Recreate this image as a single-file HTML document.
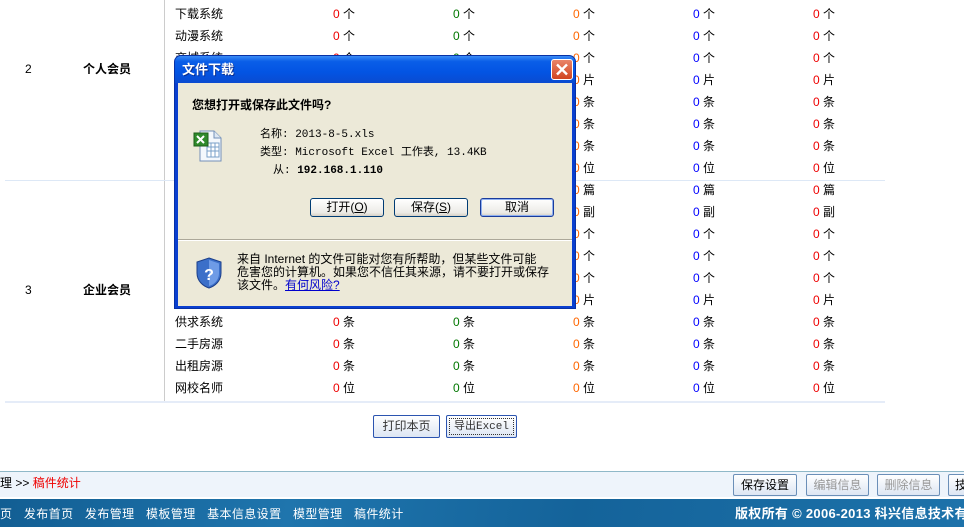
<!DOCTYPE html>
<html><head><meta charset="utf-8"><style>
*{margin:0;padding:0;box-sizing:border-box}
body{width:964px;height:527px;overflow:hidden;background:#fff;font-family:"Liberation Sans","Noto Sans CJK SC","WenQuanYi Zen Hei",sans-serif;font-size:12px;color:#000;position:relative}
.a{position:absolute;white-space:nowrap;line-height:14px}
.r{position:absolute;left:0;width:964px;height:22px}
.r span{position:absolute;top:4px;line-height:14px}
.n{left:175px}
.c1{left:333px;color:#e00}.c2{left:453px;color:#070}.c3{left:573px;color:#f60}.c4{left:693px;color:#00f}.c5{left:813px;color:#e00}
.u1{left:343px}.u2{left:463px}.u3{left:583px}.u4{left:703px}.u5{left:823px}
.btn{position:absolute;border:1px solid #2b54b0;border-radius:2px;background:linear-gradient(#fff,#dde6f3);text-align:center;font-size:12px;line-height:21px;color:#333}
.xb{position:absolute;border:1px solid #003c74;border-radius:3px;background:linear-gradient(#fff,#ecebe6 80%,#d6d0c5);text-align:center;line-height:17px;font-size:12px}
</style></head><body>
<div style="position:absolute;left:164px;top:0;width:1px;height:401px;background:#ccc"></div>
<div style="position:absolute;left:5px;top:180px;width:880px;height:1px;background:#dde8f6"></div>
<div style="position:absolute;left:5px;top:401px;width:880px;height:2px;background:#e5ecf8"></div>
<div class="a" style="left:25px;top:62px">2</div>
<div class="a" style="left:83px;top:62px;font-weight:bold">个人会员</div>
<div class="a" style="left:25px;top:283px">3</div>
<div class="a" style="left:83px;top:283px;font-weight:bold">企业会员</div>

<div class="r" style="top:3px"><span class="n">下载系统</span><span class="c1">0</span><span class="u1">个</span><span class="c2">0</span><span class="u2">个</span><span class="c3">0</span><span class="u3">个</span><span class="c4">0</span><span class="u4">个</span><span class="c5">0</span><span class="u5">个</span></div>
<div class="r" style="top:25px"><span class="n">动漫系统</span><span class="c1">0</span><span class="u1">个</span><span class="c2">0</span><span class="u2">个</span><span class="c3">0</span><span class="u3">个</span><span class="c4">0</span><span class="u4">个</span><span class="c5">0</span><span class="u5">个</span></div>
<div class="r" style="top:47px"><span class="n">商城系统</span><span class="c1">0</span><span class="u1">个</span><span class="c2">0</span><span class="u2">个</span><span class="c3">0</span><span class="u3">个</span><span class="c4">0</span><span class="u4">个</span><span class="c5">0</span><span class="u5">个</span></div>
<div class="r" style="top:69px"><span class="n">图片系统</span><span class="c1">0</span><span class="u1">片</span><span class="c2">0</span><span class="u2">片</span><span class="c3">0</span><span class="u3">片</span><span class="c4">0</span><span class="u4">片</span><span class="c5">0</span><span class="u5">片</span></div>
<div class="r" style="top:91px"><span class="n">供求系统</span><span class="c1">0</span><span class="u1">条</span><span class="c2">0</span><span class="u2">条</span><span class="c3">0</span><span class="u3">条</span><span class="c4">0</span><span class="u4">条</span><span class="c5">0</span><span class="u5">条</span></div>
<div class="r" style="top:113px"><span class="n">二手房源</span><span class="c1">0</span><span class="u1">条</span><span class="c2">0</span><span class="u2">条</span><span class="c3">0</span><span class="u3">条</span><span class="c4">0</span><span class="u4">条</span><span class="c5">0</span><span class="u5">条</span></div>
<div class="r" style="top:135px"><span class="n">出租房源</span><span class="c1">0</span><span class="u1">条</span><span class="c2">0</span><span class="u2">条</span><span class="c3">0</span><span class="u3">条</span><span class="c4">0</span><span class="u4">条</span><span class="c5">0</span><span class="u5">条</span></div>
<div class="r" style="top:157px"><span class="n">网校名师</span><span class="c1">0</span><span class="u1">位</span><span class="c2">0</span><span class="u2">位</span><span class="c3">0</span><span class="u3">位</span><span class="c4">0</span><span class="u4">位</span><span class="c5">0</span><span class="u5">位</span></div>

<div class="r" style="top:179px"><span class="n">文章系统</span><span class="c1">0</span><span class="u1">篇</span><span class="c2">0</span><span class="u2">篇</span><span class="c3">0</span><span class="u3">篇</span><span class="c4">0</span><span class="u4">篇</span><span class="c5">0</span><span class="u5">篇</span></div>
<div class="r" style="top:201px"><span class="n">图片系统</span><span class="c1">0</span><span class="u1">副</span><span class="c2">0</span><span class="u2">副</span><span class="c3">0</span><span class="u3">副</span><span class="c4">0</span><span class="u4">副</span><span class="c5">0</span><span class="u5">副</span></div>
<div class="r" style="top:223px"><span class="n">下载系统</span><span class="c1">0</span><span class="u1">个</span><span class="c2">0</span><span class="u2">个</span><span class="c3">0</span><span class="u3">个</span><span class="c4">0</span><span class="u4">个</span><span class="c5">0</span><span class="u5">个</span></div>
<div class="r" style="top:245px"><span class="n">动漫系统</span><span class="c1">0</span><span class="u1">个</span><span class="c2">0</span><span class="u2">个</span><span class="c3">0</span><span class="u3">个</span><span class="c4">0</span><span class="u4">个</span><span class="c5">0</span><span class="u5">个</span></div>
<div class="r" style="top:267px"><span class="n">商城系统</span><span class="c1">0</span><span class="u1">个</span><span class="c2">0</span><span class="u2">个</span><span class="c3">0</span><span class="u3">个</span><span class="c4">0</span><span class="u4">个</span><span class="c5">0</span><span class="u5">个</span></div>
<div class="r" style="top:289px"><span class="n">图库系统</span><span class="c1">0</span><span class="u1">片</span><span class="c2">0</span><span class="u2">片</span><span class="c3">0</span><span class="u3">片</span><span class="c4">0</span><span class="u4">片</span><span class="c5">0</span><span class="u5">片</span></div>
<div class="r" style="top:311px"><span class="n">供求系统</span><span class="c1">0</span><span class="u1">条</span><span class="c2">0</span><span class="u2">条</span><span class="c3">0</span><span class="u3">条</span><span class="c4">0</span><span class="u4">条</span><span class="c5">0</span><span class="u5">条</span></div>
<div class="r" style="top:333px"><span class="n">二手房源</span><span class="c1">0</span><span class="u1">条</span><span class="c2">0</span><span class="u2">条</span><span class="c3">0</span><span class="u3">条</span><span class="c4">0</span><span class="u4">条</span><span class="c5">0</span><span class="u5">条</span></div>
<div class="r" style="top:355px"><span class="n">出租房源</span><span class="c1">0</span><span class="u1">条</span><span class="c2">0</span><span class="u2">条</span><span class="c3">0</span><span class="u3">条</span><span class="c4">0</span><span class="u4">条</span><span class="c5">0</span><span class="u5">条</span></div>
<div class="r" style="top:377px"><span class="n">网校名师</span><span class="c1">0</span><span class="u1">位</span><span class="c2">0</span><span class="u2">位</span><span class="c3">0</span><span class="u3">位</span><span class="c4">0</span><span class="u4">位</span><span class="c5">0</span><span class="u5">位</span></div>

<div class="btn" style="left:373px;top:415px;width:67px;height:23px">打印本页</div>
<div class="btn" style="left:446px;top:415px;width:71px;height:23px;font-family:'Liberation Mono','Noto Sans CJK SC',monospace;font-size:11px;line-height:22px"><div style="position:absolute;inset:2px;border:1px dotted #333"></div>导出Excel</div>

<div style="position:absolute;left:0;top:471px;width:964px;height:26px;background:#eef4fb;border-top:1px solid #8fb8c8"></div>
<div class="a" style="left:0;top:476px">理 &gt;&gt; <span style="color:#e00">稿件统计</span></div>
<div class="btn" style="left:733px;top:474px;width:64px;height:22px;color:#000;border-color:#6b8fb8">保存设置</div>
<div class="btn" style="left:806px;top:474px;width:63px;height:22px;color:#999;border-color:#6b8fb8">编辑信息</div>
<div class="btn" style="left:877px;top:474px;width:63px;height:22px;color:#999;border-color:#6b8fb8">删除信息</div>
<div class="btn" style="left:948px;top:474px;width:30px;height:22px;color:#000;border-color:#6b8fb8;text-align:left;padding-left:6px">技</div>
<div style="position:absolute;left:0;top:499px;width:964px;height:28px;background:linear-gradient(100deg,#125e93,#1f75ad 30%,#14639a 60%,#1d72aa)"></div>
<div class="a" style="left:0;top:507px;color:#fff;letter-spacing:0.4px;word-spacing:2px">页&nbsp;&nbsp;发布首页&nbsp;&nbsp;发布管理&nbsp;&nbsp;模板管理&nbsp;&nbsp;基本信息设置&nbsp;&nbsp;模型管理&nbsp;&nbsp;稿件统计</div>
<div class="a" style="left:735px;top:507px;color:#fff;font-weight:bold;font-size:13px;letter-spacing:0.3px">版权所有 © 2006-2013 科兴信息技术有</div>

<!-- dialog -->
<div style="position:absolute;left:174px;top:55px;width:402px;height:254px;background:#0a3fd0;border-radius:7px 7px 0 0;border:1px solid #0831a5">
 <div style="position:absolute;left:0;top:0;width:400px;height:27px;border-radius:6px 6px 0 0;background:linear-gradient(#3b8cf5,#0a5ee8 20%,#0354e3 60%,#0a4bd0)"></div>
 <div class="a" style="left:7px;top:7px;color:#fff;font-weight:bold;font-size:13px;text-shadow:1px 1px #0a2e90">文件下载</div>
 <div style="position:absolute;left:376px;top:3px;width:22px;height:21px;border:1px solid #fff;border-radius:3px;background:linear-gradient(#e9856a,#d1441f)"><svg width="20" height="19" viewBox="0 0 20 19"><path d="M5 4.5L15 14.5M15 4.5L5 14.5" stroke="#fff" stroke-width="2.4"/></svg></div>
 <div style="position:absolute;left:3px;top:27px;width:394px;height:223px;background:#ece9d8">
  <div class="a" style="left:14px;top:15px;font-weight:bold">您想打开或保存此文件吗?</div>
  <svg style="position:absolute;left:15px;top:46px" width="32" height="34" viewBox="0 0 32 34"><path d="M7 2h14l7 7v23H7z" fill="#f4f8fc" stroke="#7390b8"/><path d="M21 2v7h7" fill="#dde7f2" stroke="#7390b8"/><rect x="14" y="14" width="12" height="14" fill="#fff" stroke="#7aa0c8"/><path d="M14 18h12M14 22h12M18 14v14M22 14v14" stroke="#7aa0c8"/><rect x="1" y="4" width="14" height="13" fill="#2f8a2b" stroke="#1c5e1a"/><path d="M4 7l7 7M11 7l-7 7" stroke="#fff" stroke-width="2"/></svg>
  <div class="a" style="left:82px;top:45px;font-family:'Liberation Mono','Noto Sans CJK SC',monospace;font-size:11px">名称: 2013-8-5.xls</div>
  <div class="a" style="left:82px;top:63px;font-family:'Liberation Mono','Noto Sans CJK SC',monospace;font-size:11px">类型: Microsoft Excel 工作表, 13.4KB</div>
  <div class="a" style="left:95px;top:81px;font-family:'Liberation Mono','Noto Sans CJK SC',monospace;font-size:11px">从: <b>192.168.1.110</b></div>
  <div class="xb" style="left:132px;top:115px;width:74px;height:19px">打开(<u>O</u>)</div>
  <div class="xb" style="left:216px;top:115px;width:74px;height:19px">保存(<u>S</u>)</div>
  <div class="xb" style="left:302px;top:115px;width:74px;height:19px;border-color:#1a3c9c;box-shadow:inset 0 0 0 1px #8fb0f0">取消</div>
  <div style="position:absolute;left:0;top:156px;width:394px;height:2px;border-top:1px solid #aca899;border-bottom:1px solid #fff"></div>
  <svg style="position:absolute;left:17px;top:174px" width="28" height="32" viewBox="0 0 28 32"><path d="M14 1L26 5v11c0 8-6 13-12 15C8 29 2 24 2 16V5z" fill="#3b6fc9" stroke="#1c3f8a"/><path d="M14 3L24 6.5v9.5c0 7-5 11.5-10 13z" fill="#6e9be6"/><text x="14" y="23" font-size="16" font-weight="bold" fill="#fff" text-anchor="middle" font-family="Liberation Sans">?</text></svg>
  <div class="a" style="left:59px;top:170px;font-size:12px;line-height:13px">来自 Internet 的文件可能对您有所帮助，但某些文件可能<br>危害您的计算机。如果您不信任其来源，请不要打开或保存<br>该文件。<span style="color:#00c;text-decoration:underline">有何风险?</span></div>
 </div>
</div>
</body></html>
